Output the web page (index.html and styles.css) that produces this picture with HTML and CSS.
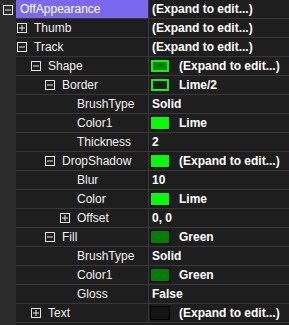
FILE: index.html
```html
<!DOCTYPE html>
<html lang="en">

<head>
    <meta charset="UTF-8">
    <meta name="viewport" content="width=device-width, initial-scale=1.0">
    <title>Property Grid</title>
    <link rel="stylesheet" href="styles.css">
</head>

<body>
    <div class="grid">

        <div class="row selected">
            <div class="gutter"><span class="toggle minus"></span></div>
            <div class="name lv0">OffAppearance</div>
            <div class="value">(Expand to edit...)</div>
        </div>

        <div class="row">
            <div class="gutter"></div>
            <div class="name lv1"><span class="toggle plus"></span>Thumb</div>
            <div class="value">(Expand to edit...)</div>
        </div>

        <div class="row">
            <div class="gutter"></div>
            <div class="name lv1"><span class="toggle minus"></span>Track</div>
            <div class="value">(Expand to edit...)</div>
        </div>

        <div class="row">
            <div class="gutter"></div>
            <div class="name lv2"><span class="toggle minus"></span>Shape</div>
            <div class="value"><span class="swatch ring green"></span>(Expand to edit...)</div>
        </div>

        <div class="row">
            <div class="gutter"></div>
            <div class="name lv3"><span class="toggle minus"></span>Border</div>
            <div class="value"><span class="swatch ring"></span>Lime/2</div>
        </div>

        <div class="row">
            <div class="gutter"></div>
            <div class="name lv4">BrushType</div>
            <div class="value">Solid</div>
        </div>

        <div class="row">
            <div class="gutter"></div>
            <div class="name lv4">Color1</div>
            <div class="value"><span class="swatch lime"></span>Lime</div>
        </div>

        <div class="row">
            <div class="gutter"></div>
            <div class="name lv4">Thickness</div>
            <div class="value">2</div>
        </div>

        <div class="row">
            <div class="gutter"></div>
            <div class="name lv3"><span class="toggle minus"></span>DropShadow</div>
            <div class="value"><span class="swatch lime"></span>(Expand to edit...)</div>
        </div>

        <div class="row">
            <div class="gutter"></div>
            <div class="name lv4">Blur</div>
            <div class="value">10</div>
        </div>

        <div class="row">
            <div class="gutter"></div>
            <div class="name lv4">Color</div>
            <div class="value"><span class="swatch lime"></span>Lime</div>
        </div>

        <div class="row">
            <div class="gutter"></div>
            <div class="name lv4"><span class="toggle plus"></span>Offset</div>
            <div class="value">0, 0</div>
        </div>

        <div class="row">
            <div class="gutter"></div>
            <div class="name lv3"><span class="toggle minus"></span>Fill</div>
            <div class="value"><span class="swatch green"></span>Green</div>
        </div>

        <div class="row">
            <div class="gutter"></div>
            <div class="name lv4">BrushType</div>
            <div class="value">Solid</div>
        </div>

        <div class="row">
            <div class="gutter"></div>
            <div class="name lv4">Color1</div>
            <div class="value"><span class="swatch green"></span>Green</div>
        </div>

        <div class="row">
            <div class="gutter"></div>
            <div class="name lv4">Gloss</div>
            <div class="value">False</div>
        </div>

        <div class="row">
            <div class="gutter"></div>
            <div class="name lv2"><span class="toggle plus"></span>Text</div>
            <div class="value"><span class="swatch empty"></span>(Expand to edit...)</div>
        </div>

    </div>
</body>

</html>
```

FILE: styles.css
```css
body {
    margin: 0;
    padding: 0;
    background: #1e1e1e;
    font-family: "Liberation Sans", Arial, sans-serif;
    font-size: 12px;
    color: #f2f2f2;
}

.grid {
    display: flex;
    flex-direction: column;
    width: 289px;
    height: 325px;
    background: #1e1e1e;
    position: relative;
}

/* the light strip on the left runs the full height */
.grid::before {
    content: "";
    position: absolute;
    left: 0;
    top: 0;
    bottom: 0;
    width: 16px;
    background: #2b2b2b;
}

.row {
    display: grid;
    grid-template-columns: 16px 132px 1px 1fr;
    height: 19px;
    position: relative;
}

.gutter {
    grid-column: 1;
    display: flex;
    align-items: center;
    padding-left: 3px;
    z-index: 1;
}

.name {
    grid-column: 2;
    display: flex;
    align-items: center;
    border-bottom: 1px solid #383838;
    white-space: nowrap;
    overflow: hidden;
}

.row::after {
    content: "";
    grid-column: 3;
    grid-row: 1;
    background: #383838;
}

.value {
    grid-column: 4;
    display: flex;
    align-items: center;
    padding-left: 3px;
    border-bottom: 1px solid #383838;
    font-weight: bold;
    color: #ffffff;
    white-space: nowrap;
}

.selected .name {
    background: #7b68ee;
    color: #ffffff;
}

/* indent levels */
.lv0 { padding-left: 4px; }
.lv1 { padding-left: 1px; }
.lv2 { padding-left: 15px; }
.lv3 { padding-left: 29px; }
.lv4 { padding-left: 61px; }
.lv4 .toggle { margin-left: -17px; }

.toggle {
    box-sizing: border-box;
    width: 10px;
    height: 10px;
    border: 1px solid #e6e6e6;
    margin-right: 7px;
    position: relative;
    flex: none;
}

.toggle::before {
    content: "";
    position: absolute;
    left: 1px;
    right: 1px;
    top: 3px;
    height: 2px;
    background: #e6e6e6;
    transform: scaleY(0.5);
}

.plus::after {
    content: "";
    position: absolute;
    top: 1px;
    bottom: 1px;
    left: 3px;
    width: 2px;
    background: #e6e6e6;
    transform: scaleX(0.5);
}

.swatch {
    box-sizing: border-box;
    width: 20px;
    height: 14px;
    border: 1px solid #000000;
    margin-left: -2px;
    margin-right: 9px;
    flex: none;
}

.swatch.lime {
    background: #00ff00;
}

.swatch.green {
    background: #008000;
}

.swatch.ring {
    box-shadow: inset 0 0 0 2px #00ff00;
}

.swatch.empty {
    background: #141414;
}
```
